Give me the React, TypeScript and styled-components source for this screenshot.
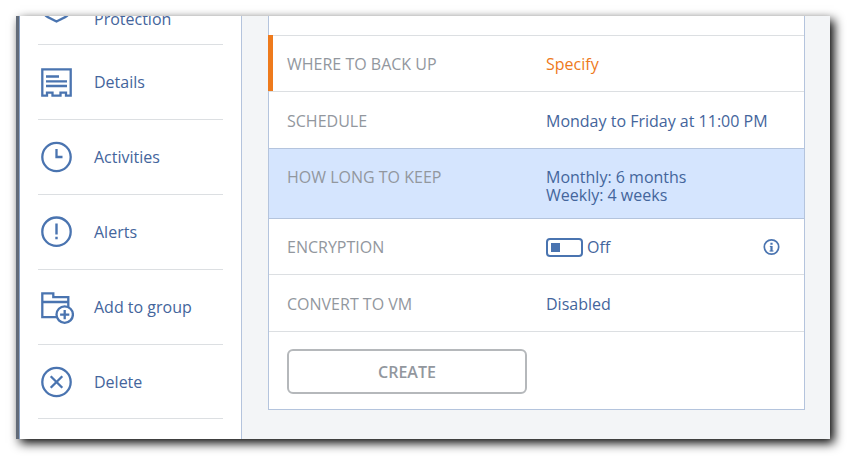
import React, { useState } from "react";
import styled, { createGlobalStyle } from "styled-components";

const color = {
  text: "#44659c",
  icon: "#4a74b0",
  muted: "#92979e",
  accent: "#ee7a1c",
  line: "#dcdfe2",
  frame: "#b4c4dd",
  canvas: "#f3f5f7",
  selected: "#d5e5fe",
};

const GlobalStyle = createGlobalStyle`
  * { box-sizing: border-box; }
  body {
    margin: 0;
    background: #fff;
    font: 16px/18px "Open Sans", "Noto Sans", sans-serif;
    color: ${color.text};
  }
  button, input { font: inherit; }
`;

const Page = styled.div`
  padding: 16px 17px 17px 16px;
`;

const Window = styled.div`
  display: flex;
  overflow: hidden;
  background: ${color.canvas};
  border-left: 3px solid #626b78;
  box-shadow: 4px 4px 10px #000;
`;

const Sidebar = styled.nav`
  flex: none;
  width: 223px;
  padding: 0 18px 20px;
  background: #fff;
  border-left: 1px solid #8ba3c6;
  border-right: 1px solid ${color.frame};
`;

/* The list is scrolled, so its first entry is partly hidden. */
const NavList = styled.ul`
  list-style: none;
  margin: -46px 0 0;
  padding: 0;
`;

const NavItem = styled.li`
  display: flex;
  height: 75px;
  border-bottom: 1px solid ${color.line};

  &:last-child {
    height: 74px;
  }
`;

const NavButton = styled.button`
  display: flex;
  flex: 1;
  align-items: center;
  gap: 20px;
  padding: 0;
  border: 0;
  background: none;
  color: inherit;
  text-align: left;
  cursor: pointer;
`;

const NavLabel = styled.span<{ $second?: boolean }>`
  padding-top: ${(p) => (p.$second ? "24px" : "0")};
`;

const NavIcon = styled.svg`
  flex: none;
  width: 36px;
  height: 36px;
  fill: none;
  stroke: ${color.icon};
  stroke-width: 2.3;
`;

const Main = styled.main`
  flex: 1;
  min-width: 0;
  padding: 0 25px 29px 26px;
`;

const Card = styled.section`
  padding-top: 19px;
  background: #fff;
  border: 1px solid ${color.frame};
  border-top: 0;
`;

const Settings = styled.dl`
  margin: 0;
`;

const Row = styled.div<{ $tall?: boolean; $selected?: boolean; $required?: boolean }>`
  position: relative;
  display: grid;
  grid-template-columns: 259px 1fr;
  padding: ${(p) => (p.$tall ? "20px 24px 18px 18px" : p.$selected ? "19px 24px 14px 18px" : "19px 24px 18px 18px")};
  border-top: 1px solid ${(p) => (p.$selected ? color.frame : color.line)};
  background: ${(p) => (p.$selected ? color.selected : "transparent")};

  &::before {
    content: "";
    display: ${(p) => (p.$required ? "block" : "none")};
    position: absolute;
    top: -1px;
    bottom: 0;
    left: -1px;
    width: 5px;
    background: ${color.accent};
  }
`;

const RowAfterSelected = styled(Row)`
  border-top-color: ${color.frame};
`;

const Name = styled.dt`
  color: ${color.muted};
  text-transform: uppercase;
`;

const Value = styled.dd`
  display: flex;
  justify-content: space-between;
  margin: 0;
`;

const Lines = styled.div`
  display: flex;
  flex-direction: column;
`;

const SpecifyLink = styled.a`
  color: ${color.accent};
  text-decoration: none;
`;

const ToggleLabel = styled.label`
  display: flex;
  align-items: center;
  gap: 4px;
  height: 18px;
  cursor: pointer;
`;

const Toggle = styled.input`
  appearance: none;
  display: flex;
  align-items: center;
  width: 37px;
  height: 19px;
  margin: 0;
  padding: 0 3px;
  border: 2px solid ${color.icon};
  border-radius: 4px;
  background: #fff;
  cursor: pointer;

  &::before {
    content: "";
    width: 9px;
    height: 9px;
    background: ${color.icon};
  }

  &:checked {
    justify-content: flex-end;
  }
`;

const InfoButton = styled.button`
  display: flex;
  align-items: center;
  height: 18px;
  padding: 0;
  border: 0;
  background: none;
  color: ${color.icon};
  cursor: pointer;
`;

const Footer = styled.div`
  padding: 17px 18px 15px;
  border-top: 1px solid ${color.line};
`;

const CreateButton = styled.button`
  width: 240px;
  height: 45px;
  border: 2px solid #b5b8bb;
  border-radius: 6px;
  background: #fff;
  color: ${color.muted};
  font-weight: 600;
  text-transform: uppercase;
`;

const navEntries: { label: string; second?: boolean; icon: React.ReactNode }[] = [
  {
    label: "Protection",
    second: true,
    icon: <path d="M18.5 3.5 6.5 8v15.5q0 3 3 4.400l9 4.600 9-4.600q3-1.400 3-4.400V8z" />,
  },
  {
    label: "Details",
    icon: (
      <>
        <path d="M4.300 5.300h28.400v26.400h-4.700v-3h-5.500v3h-8v-3H9v3H4.300z" />
        <path d="M8 12.500h13M8 17.300h21M8 22h21" />
      </>
    ),
  },
  {
    label: "Activities",
    icon: (
      <>
        <circle cx="18.500" cy="18" r="14.200" />
        <path d="M18.500 10v8h6" />
      </>
    ),
  },
  {
    label: "Alerts",
    icon: (
      <>
        <circle cx="18.500" cy="17.700" r="14.200" />
        <path d="M18.500 9.500v11M18.500 22.800v2.500" strokeWidth="2.400" />
      </>
    ),
  },
  {
    label: "Add to group",
    icon: (
      <>
        <path d="M18 28.200H4.300V4.400h11v3.800h15v10.300M4.300 13h26" />
        <circle cx="26.700" cy="25.600" r="8.200" />
        <path d="M26.700 21v9.200M22.100 25.600h9.200" />
      </>
    ),
  },
  {
    label: "Delete",
    icon: (
      <>
        <circle cx="18.500" cy="18" r="14.200" />
        <path d="m12.700 12.200 11.600 11.600M24.300 12.200 12.700 23.800" />
      </>
    ),
  },
];

export default function App() {
  const [encrypted, setEncrypted] = useState(false);

  return (
    <>
      <GlobalStyle />
      <Page>
        <Window>
          <Sidebar>
            <NavList>
              {navEntries.map((entry) => (
                <NavItem key={entry.label}>
                  <NavButton type="button">
                    <NavIcon viewBox="0 0 36 36" aria-hidden="true">
                      {entry.icon}
                    </NavIcon>
                    <NavLabel $second={entry.second}>{entry.label}</NavLabel>
                  </NavButton>
                </NavItem>
              ))}
            </NavList>
          </Sidebar>
          <Main>
            <Card>
              <Settings>
                <Row $required>
                  <Name>Where to back up</Name>
                  <Value>
                    <SpecifyLink href="#specify">Specify</SpecifyLink>
                  </Value>
                </Row>
                <Row $tall>
                  <Name>Schedule</Name>
                  <Value>Monday to Friday at 11:00 PM</Value>
                </Row>
                <Row $selected>
                  <Name>How long to keep</Name>
                  <Value>
                    <Lines>
                      <span>Monthly: 6 months</span>
                      <span>Weekly: 4 weeks</span>
                    </Lines>
                  </Value>
                </Row>
                <RowAfterSelected>
                  <Name>Encryption</Name>
                  <Value>
                    <ToggleLabel>
                      <Toggle
                        type="checkbox"
                        role="switch"
                        checked={encrypted}
                        onChange={(e) => setEncrypted(e.target.checked)}
                      />
                      {encrypted ? "On" : "Off"}
                    </ToggleLabel>
                    <InfoButton type="button" aria-label="About encryption">
                      <svg width="17" height="18" viewBox="0 0 17 18" fill="none" stroke="currentColor" aria-hidden="true">
                        <circle cx="8.500" cy="9" r="7.200" strokeWidth="1.700" />
                        <path d="M8.500 4.800v2M8.500 8v5.200" strokeWidth="2.200" />
                        <path d="M6.800 8.400h1.700M6.500 13h4" strokeWidth="1" />
                      </svg>
                    </InfoButton>
                  </Value>
                </RowAfterSelected>
                <Row $tall>
                  <Name>Convert to VM</Name>
                  <Value>Disabled</Value>
                </Row>
              </Settings>
              <Footer>
                <CreateButton type="button">Create</CreateButton>
              </Footer>
            </Card>
          </Main>
        </Window>
      </Page>
    </>
  );
}
